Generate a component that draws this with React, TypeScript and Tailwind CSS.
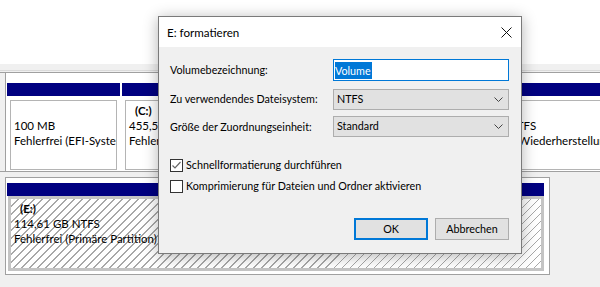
const hatch =
  "bg-[repeating-linear-gradient(135deg,#ffffff_0px,#ffffff_4.8px,#a8a8a8_4.8px,#a8a8a8_5.66px)]";

function Chevron() {
  return (
    <svg width="9" height="5" viewBox="0 0 9 5" className="mr-[5px]">
      <path d="M0.5 0.5 L4.5 4.5 L8.5 0.5" fill="none" stroke="#444" strokeWidth="1" />
    </svg>
  );
}

function Select({ value }: { value: string }) {
  return (
    <div className="flex h-[21px] w-[176px] shrink-0 items-center justify-between border border-[#adadad] bg-[#e1e1e1] pl-[3px]">
      <span>{value}</span>
      <Chevron />
    </div>
  );
}

function Checkbox({ checked, label }: { checked?: boolean; label: string }) {
  return (
    <div className="flex h-[13px] items-center gap-[3px] whitespace-nowrap">
      <div className="flex h-[13px] w-[13px] shrink-0 items-center justify-center border border-[#333] bg-white">
        {checked && (
          <svg width="11" height="11" viewBox="0 0 11 11">
            <path d="M1.5 5.5 L4 8 L9.5 2" fill="none" stroke="#666" strokeWidth="1.2" />
          </svg>
        )}
      </div>
      <span>{label}</span>
    </div>
  );
}

function Partition({
  name,
  lines,
  className,
}: {
  name?: string;
  lines: string[];
  className: string;
}) {
  return (
    <div className={"flex shrink-0 flex-col " + className}>
      <div className="h-[13px] bg-[#000080]" />
      <div className="mx-[3px] mt-[4px] h-[70px] overflow-hidden whitespace-nowrap border border-[#b4b4b4] bg-white pl-[3px] pt-[2px] leading-[15px]">
        <div className="h-[15px] pl-[6px] font-bold">{name}</div>
        {lines.map((l) => (
          <div key={l}>{l}</div>
        ))}
      </div>
    </div>
  );
}

export default function App() {
  return (
    <div className="relative h-[287px] w-[600px] overflow-hidden bg-[#f0f0f0] font-['Lato',sans-serif] text-[11.5px] text-black">
      <div className="h-[64px] bg-white" />
      <div className="h-[6px]" />
      <div className="h-[1px] bg-[#dadada]" />
      <div className="h-[1px]" />
      <div className="h-[1px] bg-[#a0a0a0]" />

      {/* Datenträger 0 */}
      <div className="ml-[5px] flex h-[98px] border-l border-[#a0a0a0] bg-white pl-[1px] pt-[10px]">
        <Partition className="w-[113px]" lines={["100 MB", "Fehlerfrei (EFI-Systempartition)"]} />
        <div className="mx-[1px] w-[1px] bg-[#c0c0c0]" />
        <Partition
          className="w-[333px]"
          name="(C:)"
          lines={["455,52 GB NTFS", "Fehlerfrei (Startpartition, Auslagerungsdatei)"]}
        />
        <div className="mx-[1px] w-[1px] bg-[#c0c0c0]" />
        <Partition className="w-[200px]" lines={["529 MB NTFS", "Fehlerfrei (Wiederherstellungspartition)"]} />
      </div>
      <div className="h-[1px] bg-[#a0a0a0]" />
      <div className="h-[5px]" />

      {/* Datenträger 1 */}
      <div className="ml-[5px] h-[98px] w-[545px] border border-[#a0a0a0] bg-white pl-[1px] pt-[5px]">
        <div className="h-[13px] w-[537px] bg-[#000080]" />
        <div
          className={
            "ml-[1px] h-[75px] w-[536px] whitespace-nowrap border-[3px] border-[#c4c4c4] pl-[3px] pt-[2px] leading-[15px] " +
            hatch
          }
        >
          <div className="pl-[6px] font-bold">(E:)</div>
          <div>114,61 GB NTFS</div>
          <div>Fehlerfrei (Primäre Partition)</div>
        </div>
      </div>

      {/* Dialog */}
      <div className="absolute left-[158px] top-[16px] flex h-[238px] w-[364px] flex-col border border-[#7a7a7a] bg-[#f0f0f0] text-[10.75px] shadow-[0_2px_14px_rgba(0,0,0,0.3)]">
        <div className="flex h-[30px] items-center justify-between bg-white pl-[8px] pr-[9px]">
          <span className="pt-[1px] text-[11.6px]">E: formatieren</span>
          <svg width="11" height="11" viewBox="0 0 11 11">
            <path d="M0.5 0.5 L10.5 10.5 M10.5 0.5 L0.5 10.5" stroke="#111" strokeWidth="1" />
          </svg>
        </div>
        <div className="flex flex-1 flex-col pl-[11px] pr-[12px] pt-[12px]">
          <div className="flex items-center">
            <span className="w-[163px] shrink-0 whitespace-nowrap pt-[1px]">Volumebezeichnung:</span>
            <div className="flex h-[22px] w-[176px] shrink-0 items-center border border-[#0078d7] bg-white pl-[1px]">
              <span className="h-[17px] bg-[#0078d7] pr-[1px] leading-[17px] text-white">Volume</span>
            </div>
          </div>
          <div className="mt-[8px] flex items-center">
            <span className="w-[163px] shrink-0 whitespace-nowrap">Zu verwendendes Dateisystem:</span>
            <Select value="NTFS" />
          </div>
          <div className="mt-[6px] flex items-center">
            <span className="w-[163px] shrink-0 whitespace-nowrap pt-[1px]">Größe der Zuordnungseinheit:</span>
            <Select value="Standard" />
          </div>
          <div className="mt-[22px]">
            <Checkbox checked label="Schnellformatierung durchführen" />
          </div>
          <div className="mt-[8px]">
            <Checkbox label="Komprimierung für Dateien und Ordner aktivieren" />
          </div>
          <div className="mt-[25px] flex justify-end gap-[7px]">
            <button className="h-[22px] w-[74px] border-2 border-[#0078d7] bg-[#e1e1e1]">OK</button>
            <button className="h-[22px] w-[74px] border border-[#adadad] bg-[#e1e1e1]">Abbrechen</button>
          </div>
        </div>
      </div>
    </div>
  );
}
